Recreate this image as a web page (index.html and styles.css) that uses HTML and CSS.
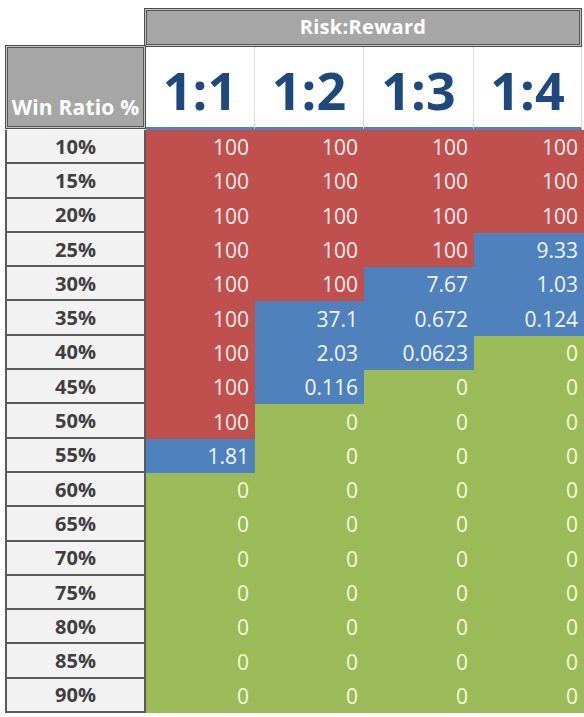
FILE: index.html
```html
<!DOCTYPE html>
<html lang="en">
<head>
    <meta charset="UTF-8">
    <title>Win Ratio vs Risk:Reward</title>
    <link rel="stylesheet" href="styles.css">
</head>
<body>
    <div class="sheet">
        <div class="rr">Risk:Reward</div>

        <div class="head">
            <div class="wr">Win Ratio %</div>
            <div class="ratio">1:1</div>
            <div class="ratio">1:2</div>
            <div class="ratio">1:3</div>
            <div class="ratio">1:4</div>
        </div>

        <div class="grid">
            <div class="pct">10%</div><div class="v red">100</div><div class="v red">100</div><div class="v red">100</div><div class="v red">100</div>
            <div class="pct">15%</div><div class="v red">100</div><div class="v red">100</div><div class="v red">100</div><div class="v red">100</div>
            <div class="pct">20%</div><div class="v red">100</div><div class="v red">100</div><div class="v red">100</div><div class="v red">100</div>
            <div class="pct">25%</div><div class="v red">100</div><div class="v red">100</div><div class="v red">100</div><div class="v blue">9.33</div>
            <div class="pct">30%</div><div class="v red">100</div><div class="v red">100</div><div class="v blue">7.67</div><div class="v blue">1.03</div>
            <div class="pct">35%</div><div class="v red">100</div><div class="v blue">37.1</div><div class="v blue">0.672</div><div class="v blue">0.124</div>
            <div class="pct">40%</div><div class="v red">100</div><div class="v blue">2.03</div><div class="v blue">0.0623</div><div class="v green">0</div>
            <div class="pct">45%</div><div class="v red">100</div><div class="v blue">0.116</div><div class="v green">0</div><div class="v green">0</div>
            <div class="pct">50%</div><div class="v red">100</div><div class="v green">0</div><div class="v green">0</div><div class="v green">0</div>
            <div class="pct">55%</div><div class="v blue">1.81</div><div class="v green">0</div><div class="v green">0</div><div class="v green">0</div>
            <div class="pct">60%</div><div class="v green">0</div><div class="v green">0</div><div class="v green">0</div><div class="v green">0</div>
            <div class="pct">65%</div><div class="v green">0</div><div class="v green">0</div><div class="v green">0</div><div class="v green">0</div>
            <div class="pct">70%</div><div class="v green">0</div><div class="v green">0</div><div class="v green">0</div><div class="v green">0</div>
            <div class="pct">75%</div><div class="v green">0</div><div class="v green">0</div><div class="v green">0</div><div class="v green">0</div>
            <div class="pct">80%</div><div class="v green">0</div><div class="v green">0</div><div class="v green">0</div><div class="v green">0</div>
            <div class="pct">85%</div><div class="v green">0</div><div class="v green">0</div><div class="v green">0</div><div class="v green">0</div>
            <div class="pct">90%</div><div class="v green">0</div><div class="v green">0</div><div class="v green">0</div><div class="v green">0</div>
        </div>
    </div>
</body>
</html>
```

FILE: styles.css
```css
body {
    margin: 0;
    background: #fff;
    font-family: 'Open Sans', 'Liberation Sans', sans-serif;
}

.sheet {
    padding-top: 8px;
    width: 584px;
}

.rr {
    margin-left: 144px;
    width: 438px;
    height: 39px;
    box-sizing: border-box;
    background: #a6a6a6;
    border: 1px solid #4d4d4d;
    box-shadow: inset 0 0 0 1px #c4c4c4, inset 0 0 0 2px #555;
    color: #fff;
    font-weight: bold;
    font-size: 20px;
    letter-spacing: 0.3px;
    text-align: center;
    line-height: 36px;
}

.head {
    display: grid;
    grid-template-columns: 141px 109px 109px 110px 108px;
    margin-left: 5px;
}

.wr {
    margin-top: -2px;
    height: 84px;
    box-sizing: border-box;
    background: #a6a6a6;
    border: 1px solid #4d4d4d;
    box-shadow: inset 0 0 0 1px #c4c4c4, inset 0 0 0 2px #555;
    color: #fff;
    font-weight: bold;
    font-size: 21px;
    letter-spacing: 0.2px;
    display: flex;
    align-items: flex-end;
    justify-content: center;
    padding-bottom: 7px;
    white-space: nowrap;
}

.ratio {
    height: 83px;
    box-sizing: border-box;
    background: #fff;
    border-right: 1px solid #dcdcdc;
    border-bottom: 3px solid #4f81bd;
    color: #1f497d;
    font-weight: bold;
    font-size: 52px;
    text-align: center;
    line-height: 86px;
}

.grid {
    display: grid;
    grid-template-columns: 141px 109px 109px 110px 110px;
    grid-auto-rows: 34.3px;
    margin-left: 5px;
}

.pct {
    box-sizing: border-box;
    background: #f2f2f2;
    border-left: 2px solid #5a5a5a;
    border-right: 2px solid #5a5a5a;
    border-bottom: 2px solid #5a5a5a;
    color: #3f3f3f;
    font-weight: bold;
    font-size: 20px;
    display: flex;
    align-items: center;
    justify-content: center;
}

.v {
    font-size: 21px;
    text-align: right;
    padding-right: 6px;
    display: flex;
    align-items: center;
    justify-content: flex-end;
}

.red {
    background: #c0504d;
    color: #fdeeed;
}

.blue {
    background: #4f81bd;
    color: #f2f6fb;
}

.green {
    background: #9bbb59;
    color: #f5fadf;
}
```
